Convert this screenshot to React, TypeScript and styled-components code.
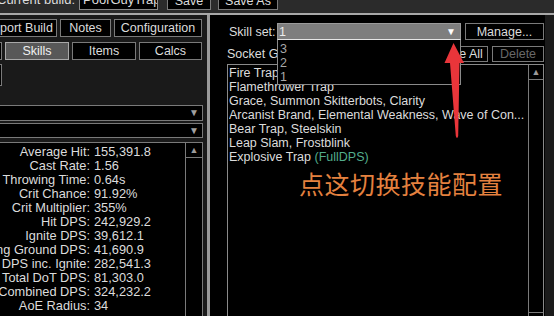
import React, { FC } from 'react';
import styled, { createGlobalStyle } from 'styled-components';

const GlobalStyle = createGlobalStyle`
  html, body {
    margin: 0;
    padding: 0;
    background: #000;
  }
  body {
    font-family: "Liberation Sans", Arial, sans-serif;
    overflow: hidden;
  }
`;

const Page = styled.div`
  position: relative;
  width: 554px;
  height: 316px;
  overflow: hidden;
  display: flex;
  flex-direction: column;
  font-size: 12.5px;
  color: #dcdcdc;
`;

// Top bar (cut off at the top of the screenshot)
const TopBar = styled.div`
  flex: 0 0 13px;
  box-sizing: border-box;
  background: #2b2b2b;
  display: flex;
  align-items: flex-end;
  padding-bottom: 3px;
  overflow: hidden;
`;

const BarText = styled.div`
  flex: 0 0 82px;
  margin-left: -3px;
  height: 19px;
  line-height: 18px;
  font-size: 13px;
  white-space: nowrap;
`;

const BuildName = styled.div`
  flex: 0 0 79px;
  box-sizing: border-box;
  height: 19px;
  line-height: 16px;
  padding-left: 3px;
  border: 1px solid #8a8a8a;
  background: #000;
  font-size: 13px;
  white-space: nowrap;
  overflow: hidden;
`;

const Button = styled.div<{ $w: number; $h?: number; $gap?: number; $active?: boolean; $disabled?: boolean }>`
  flex: 0 0 ${(p) => p.$w}px;
  margin-left: ${(p) => p.$gap || 0}px;
  box-sizing: border-box;
  height: ${(p) => p.$h || 18}px;
  border: 1px solid ${(p) => (p.$active ? '#a8a8a8' : '#7a7a7a')};
  background: ${(p) => (p.$active ? '#585858' : '#000')};
  color: ${(p) => (p.$disabled ? '#686868' : p.$active ? '#f0f0f0' : '#dcdcdc')};
  display: flex;
  align-items: center;
  justify-content: center;
  white-space: nowrap;
  overflow: hidden;
`;

const Separator = styled.div`
  flex: 0 0 2px;
  background: #a8a8a8;
`;

const Main = styled.div`
  flex: 1;
  display: flex;
  min-height: 0;
`;

// Left panel
const LeftPanel = styled.div`
  flex: 0 0 207px;
  box-sizing: border-box;
  background: #1a1a1a;
  padding: 4px 5px 0 0;
  display: flex;
  flex-direction: column;
  overflow: hidden;
`;

const ButtonRow = styled.div<{ $top?: number }>`
  flex: 0 0 18px;
  margin-top: ${(p) => p.$top || 0}px;
  display: flex;
  justify-content: flex-end;
  gap: 3px;
`;

const EdgeBox = styled.div`
  flex: 0 0 22px;
  width: 40px;
  margin-top: 4px;
  margin-left: -38px;
  box-sizing: border-box;
  border: 1px solid #7a7a7a;
  background: #000;
`;

const Select = styled.div<{ $top: number; $h: number }>`
  flex: 0 0 ${(p) => p.$h}px;
  margin: ${(p) => p.$top}px -1px 0 -1px;
  box-sizing: border-box;
  border: 1px solid #7a7a7a;
  background: #000;
  display: flex;
  align-items: center;
  justify-content: flex-end;
  padding-right: 3px;
`;

const Caret = styled.span<{ $light?: boolean }>`
  font-size: 10px;
  line-height: 1;
  color: ${(p) => (p.$light ? '#ffffff' : '#a0a0a0')};
`;

const StatsBox = styled.div`
  flex: 1;
  min-height: 0;
  margin: 4px -1px 0 -1px;
  border: 1px solid #7a7a7a;
  border-bottom: none;
  display: flex;
  background: #000;
`;

const StatsList = styled.div`
  flex: 1;
  padding-top: 2px;
  min-width: 0;
  font-size: 12.8px;
`;

const StatRow = styled.div`
  display: grid;
  grid-template-columns: 90px auto;
  height: 14px;
  line-height: 14px;
`;

const StatLabel = styled.div`
  display: flex;
  justify-content: flex-end;
  white-space: nowrap;
`;

const StatValue = styled.div`
  padding-left: 4px;
  white-space: nowrap;
`;

const ScrollBar = styled.div<{ $w: number }>`
  flex: 0 0 ${(p) => p.$w}px;
  border-left: 1px solid #7a7a7a;
  display: flex;
  flex-direction: column;
`;

const ScrollButton = styled.div<{ $bottom?: boolean }>`
  flex: 0 0 15px;
  box-sizing: border-box;
  ${(p) => (p.$bottom ? 'border-top' : 'border-bottom')}: 1px solid #7a7a7a;
  display: flex;
  align-items: center;
  justify-content: center;
  font-size: 9px;
  color: #9a9a9a;
`;

const ScrollTrack = styled.div`
  flex: 1;
`;

const Divider = styled.div`
  flex: 0 0 3px;
  background: #9a9a9a;
`;

// Right side
const RightPanel = styled.div`
  flex: 1;
  display: flex;
`;

const SkillsPane = styled.div`
  flex: 0 0 335px;
  box-sizing: border-box;
  background: #000;
  padding: 8px 1px 0 17px;
  display: flex;
  flex-direction: column;
`;

const SideStrip = styled.div`
  flex: 1;
  background: #1b1b1b;
`;

const SkillSetRow = styled.div`
  flex: 0 0 17px;
  display: flex;
  align-items: center;
`;

const RowLabel = styled.div<{ $w?: number; $pad?: number }>`
  flex: 0 0 ${(p) => p.$w || 50}px;
  padding-left: ${(p) => p.$pad || 0}px;
  box-sizing: border-box;
  white-space: nowrap;
`;

const SetSelect = styled.div`
  position: relative;
  flex: 0 0 184px;
  height: 17px;
  box-sizing: border-box;
  border: 1px solid #9a9a9a;
  border-bottom-color: #e6e6e6;
  background: #7e7e7e;
  color: #ececec;
  padding: 0 4px 0 1px;
  display: flex;
  align-items: center;
  justify-content: space-between;
  z-index: 2;
`;

const SetList = styled.div`
  position: absolute;
  top: calc(100% + 1px);
  left: -1px;
  width: calc(100% + 2px);
  height: 45px;
  box-sizing: border-box;
  border: 1px solid #8a8a8a;
  border-top: none;
  background: #000;
  padding: 2px 0 0 2px;
`;

const SetItem = styled.div`
  height: 14px;
  line-height: 15px;
  color: #a8a8a8;
`;

const SocketRow = styled.div`
  flex: 0 0 16px;
  margin-top: 6px;
  display: flex;
  align-items: center;
`;

const Spacer = styled.div`
  flex: 1;
`;

const ListBox = styled.div`
  flex: 0 0 264px;
  margin-top: 2px;
  box-sizing: border-box;
  border: 1px solid #8a8a8a;
  display: flex;
`;

const SkillList = styled.div`
  flex: 1;
  padding: 1px 0 0 1px;
  min-width: 0;
`;

const SkillItem = styled.div`
  height: 14px;
  line-height: 14px;
  white-space: nowrap;
  overflow: hidden;
  color: #dcdcdc;
`;

const Tag = styled.span`
  color: #52ad8c;
`;

// Annotation drawn over the screenshot
const Note = styled.div`
  position: absolute;
  z-index: 5;
  left: 299px;
  top: 169px;
  font-family: "Noto Sans CJK SC", "Noto Sans", sans-serif;
  font-size: 25px;
  line-height: 28px;
  letter-spacing: 0.5px;
  color: #e4813f;
  white-space: nowrap;
`;

const ArrowSvg = styled.svg`
  position: absolute;
  z-index: 5;
  left: 440px;
  top: 40px;
`;

const stats: Array<[string, string]> = [
  ['Average Hit:', '155,391.8'],
  ['Cast Rate:', '1.56'],
  ['Throwing Time:', '0.64s'],
  ['Crit Chance:', '91.92%'],
  ['Crit Multiplier:', '355%'],
  ['Hit DPS:', '242,929.2'],
  ['Ignite DPS:', '39,612.1'],
  ['Burning Ground DPS:', '41,690.9'],
  ['Total DPS inc. Ignite:', '282,541.3'],
  ['Total DoT DPS:', '81,303.0'],
  ['Combined DPS:', '324,232.2'],
  ['AoE Radius:', '34']
];

const skills = [
  'Fire Trap',
  'Flamethrower Trap',
  'Grace, Summon Skitterbots, Clarity',
  'Arcanist Brand, Elemental Weakness, Wave of Con...',
  'Bear Trap, Steelskin',
  'Leap Slam, Frostblink'
];

const App: FC = () => {
  return (
    <>
      <GlobalStyle />
      <Page>
        <TopBar>
          <BarText>Current build:</BarText>
          <BuildName>PoorGuyTrap</BuildName>
          <Button $w={44} $h={19} $gap={9}>
            Save
          </Button>
          <Button $w={60} $h={19} $gap={7}>
            Save As
          </Button>
        </TopBar>
        <Separator />
        <Main>
          <LeftPanel>
            <ButtonRow>
              <Button $w={75}>Import Build</Button>
              <Button $w={51}>Notes</Button>
              <Button $w={88}>Configuration</Button>
            </ButtonRow>
            <ButtonRow $top={5}>
              <Button $w={60}>Tree</Button>
              <Button $w={64} $active>
                Skills
              </Button>
              <Button $w={64}>Items</Button>
              <Button $w={63}>Calcs</Button>
            </ButtonRow>
            <EdgeBox />
            <Select $top={19} $h={16}>
              <Caret>▼</Caret>
            </Select>
            <Select $top={2} $h={15}>
              <Caret>▼</Caret>
            </Select>
            <StatsBox>
              <StatsList>
                {stats.map(([label, value]) => (
                  <StatRow key={label}>
                    <StatLabel>
                      <span>{label}</span>
                    </StatLabel>
                    <StatValue>{value}</StatValue>
                  </StatRow>
                ))}
              </StatsList>
              <ScrollBar $w={16}>
                <ScrollButton>▲</ScrollButton>
                <ScrollTrack />
              </ScrollBar>
            </StatsBox>
          </LeftPanel>
          <Divider />
          <RightPanel>
            <SkillsPane>
              <SkillSetRow>
                <RowLabel $pad={2}>Skill set:</RowLabel>
                <SetSelect>
                  <span>1</span>
                  <Caret $light>▼</Caret>
                  <SetList>
                    <SetItem>3</SetItem>
                    <SetItem>2</SetItem>
                    <SetItem>1</SetItem>
                  </SetList>
                </SetSelect>
                <Button $w={79} $h={17} $gap={4}>
                  Manage...
                </Button>
              </SkillSetRow>
              <SocketRow>
                <RowLabel $w={100}>Socket Groups:</RowLabel>
                <Spacer />
                <Button $w={63} $h={16}>
                  Delete All
                </Button>
                <Button $w={52} $h={16} $gap={4} $disabled>
                  Delete
                </Button>
              </SocketRow>
              <ListBox>
                <SkillList>
                  {skills.map((s) => (
                    <SkillItem key={s}>{s}</SkillItem>
                  ))}
                  <SkillItem>
                    Explosive Trap <Tag>(FullDPS)</Tag>
                  </SkillItem>
                </SkillList>
                <ScrollBar $w={14}>
                  <ScrollButton>▲</ScrollButton>
                  <ScrollTrack />
                  <ScrollButton $bottom>▼</ScrollButton>
                </ScrollBar>
              </ListBox>
            </SkillsPane>
            <SideStrip />
          </RightPanel>
        </Main>
        <Note>点这切换技能配置</Note>
        <ArrowSvg width="30" height="102" viewBox="440 40 30 102">
          <path
            d="M453.5 43 L464 63 L459.5 63 L458.2 136 Q457 140 455.8 136 L450 63 L444.5 63 Z"
            fill="#e9353a"
          />
        </ArrowSvg>
      </Page>
    </>
  );
};

export default App;
